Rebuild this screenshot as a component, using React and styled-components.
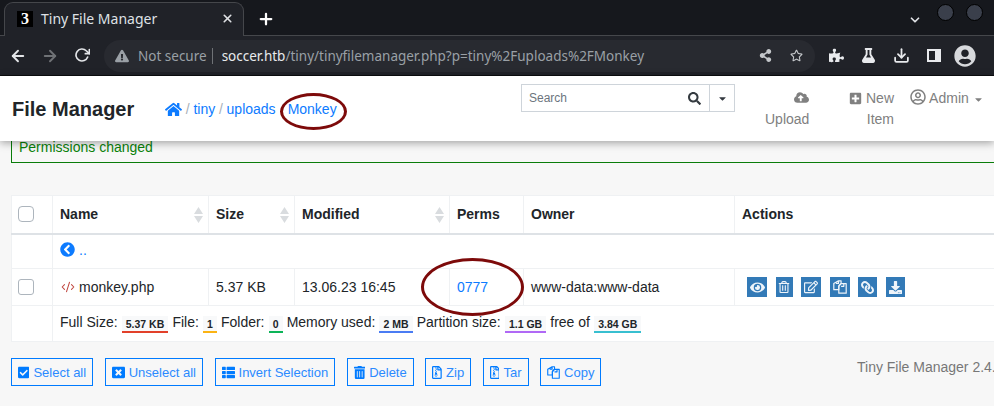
import styled, { createGlobalStyle } from "styled-components";
import {
  FaHome, FaSearch, FaCaretDown, FaCloudUploadAlt, FaPlusSquare, FaRegUserCircle,
  FaChevronCircleLeft, FaEye, FaRegTrashAlt, FaRegEdit, FaLink, FaDownload,
  FaCheckSquare, FaWindowClose, FaThList, FaTrashAlt, FaRegFileArchive, FaPuzzlePiece,
  FaFlask, FaUserCircle, FaRegStar, FaShareAlt, FaExclamationTriangle,
} from "react-icons/fa";
import { FiArrowLeft, FiArrowRight, FiRotateCw, FiPlus, FiX, FiChevronDown, FiDownload } from "react-icons/fi";
import { CodeXml } from "lucide-react";

const GlobalStyle = createGlobalStyle`
  html, body { margin: 0; padding: 0; background: #f7f7f7; }
  * { box-sizing: border-box; }
`;

const Page = styled.div`
  position: relative;
  width: 994px;
  height: 406px;
  overflow: hidden;
  display: flex;
  flex-direction: column;
  font-family: "Liberation Sans", Arial, sans-serif;
  font-size: 14px;
  color: #212529;
  background: #f7f7f7;
`;

const TabStrip = styled.div`
  height: 36px;
  flex: none;
  display: flex;
  align-items: flex-end;
  padding-left: 4px;
  background: #16181d;
  border-bottom: 1px solid #45474b;
  color: #fff;
  font-family: "Noto Sans", sans-serif;
`;

const Tab = styled.div`
  width: 240px;
  height: 34px;
  margin-bottom: -1px;
  display: flex;
  align-items: center;
  padding: 0 9px 2px 12px;
  background: #202228;
  border: 1px solid #45474b;
  border-bottom: none;
  border-radius: 9px 9px 0 0;
  font-size: 14px;
  color: #dfe1e5;
`;

const Favicon = styled.span`
  width: 16px;
  height: 16px;
  margin-right: 8px;
  background: #000;
  color: #fff;
  font: bold 16px/16px "Liberation Serif", serif;
  text-align: center;
`;

const TabTitle = styled.span`
  flex: 1;
`;

const NewTab = styled.span`
  margin: 0 auto 7px 13px;
  font-size: 18px;
  line-height: 18px;
  display: flex;
`;

const WindowControls = styled.div`
  align-self: flex-start;
  display: flex;
  align-items: flex-start;
  gap: 12px;
  margin: 4px 11px 0 0;
  color: #dfe1e5;
`;

const WindowChevron = styled(FiChevronDown)`
  margin: 9px 3px 0 0;
`;

const WindowDot = styled.span`
  width: 17px;
  height: 17px;
  border-radius: 50%;
  background: #3a3f4b;
  border: 1px solid #000;
`;

const Toolbar = styled.div`
  height: 40px;
  flex: none;
  display: flex;
  align-items: center;
  background: #202228;
  border-bottom: 1px solid #0c0d0f;
  color: #dfe1e5;
  font-family: "Noto Sans", sans-serif;
`;

const NavIcon = styled.span`
  width: 32px;
  display: flex;
  justify-content: center;
  color: ${p => p.$muted ? "#6f7276" : "#e3e5e8"};
  font-size: ${p => p.$size || 18}px;
`;

const NavIcons = styled.div`
  display: flex;
  padding-left: 2px;
  margin-right: 6px;
`;

const Omnibox = styled.div`
  width: 711px;
  height: 32px;
  display: flex;
  align-items: center;
  padding: 0 10px 0 11px;
  border-radius: 16px;
  background: #282a30;
  font-size: 13.5px;
  color: #9aa0a6;
`;

const NotSecure = styled.span`
  margin-left: 9px;
  padding-right: 5px;
  border-right: 1px solid #6f7276;
  line-height: 16px;
`;

const Url = styled.span`
  margin-left: 9px;
  flex: 1;
  white-space: nowrap;
  b { font-weight: 400; color: #e8eaed; }
`;

const OmniActions = styled.span`
  display: flex;
  gap: 18px;
  padding-right: 2px;
  font-size: 13px;
  color: #c4c7ca;
`;

const ToolActions = styled.div`
  display: flex;
  align-items: center;
  gap: 17px;
  margin-left: 14px;
  font-size: 15px;
  color: #e8eaed;
`;

const SidePanel = styled.span`
  width: 14px;
  height: 13px;
  border: 2px solid #e8eaed;
  border-right-width: 6px;
`;

const Avatar = styled.span`
  display: flex;
  margin-left: -4px;
  font-size: 22px;
  color: #d7d9dc;
`;

const Navbar = styled.header`
  position: relative;
  z-index: 2;
  height: 65px;
  flex: none;
  display: flex;
  align-items: flex-start;
  padding-left: 12px;
  background: #fff;
  box-shadow: 0 2px 8px rgba(0, 0, 0, 0.35);
`;

const Brand = styled.div`
  width: 153px;
  margin-top: 21px;
  font-size: 20px;
  font-weight: 700;
  line-height: 24px;
`;

const Breadcrumb = styled.nav`
  width: 356px;
  margin-top: 23px;
  display: flex;
  align-items: center;
  line-height: 21px;
  color: #007bff;
`;

const Sep = styled.span`
  margin: 0 3.75px;
  color: #a9b0b7;
`;

const Crumb = styled.a`
  color: #0d7bff;
  margin-left: ${p => p.$gap || 0}px;
  display: flex;
`;

const SearchBox = styled.div`
  width: 214px;
  height: 28px;
  margin-top: 8px;
  display: flex;
  border: 1px solid #ced4da;
`;

const SearchField = styled.div`
  flex: 1;
  display: flex;
  align-items: center;
  justify-content: space-between;
  padding: 0 8px 0 7px;
  border-right: 1px solid #ced4da;
  font-size: 12px;
  color: #6c757d;
  svg { font-size: 13px; color: #343a40; }
`;

const SearchCaret = styled.div`
  width: 24px;
  display: flex;
  align-items: center;
  justify-content: center;
  font-size: 11px;
  color: #343a40;
`;

const NavItem = styled.div`
  width: ${p => p.$width}px;
  margin-left: ${p => p.$gap}px;
  margin-top: 12px;
  text-align: right;
  line-height: 21px;
  color: #808080;
  svg { vertical-align: -2px; }
`;

const AdminItem = styled(NavItem)`
  white-space: nowrap;
  text-align: left;
`;

const Content = styled.main`
  flex: 1;
  display: flex;
  flex-direction: column;
`;

const Alert = styled.div`
  height: 22px;
  margin-left: 11px;
  margin-right: -4px;
  padding: 0 7px 9px;
  display: flex;
  align-items: flex-end;
  line-height: 12px;
  border: 1px solid #0a7d0a;
  border-top: none;
  color: #0a820a;
`;

const TableWrap = styled.div`
  margin: 32px 0 0 11px;
  overflow: hidden;
`;

const Table = styled.table`
  width: 1100px;
  table-layout: fixed;
  border-collapse: collapse;
  background: #fff;
  color: #212529;
  th, td {
    border: 1px solid #eff1f3;
    padding: 0 7px;
    text-align: left;
    vertical-align: middle;
  }
  th {
    height: 38px;
    font-weight: 700;
    border-bottom: 2px solid #dee2e6;
    position: relative;
  }
`;

const Check = styled.span`
  display: block;
  width: 16px;
  height: 16px;
  margin-left: -1px;
  border: 1px solid #adb5bd;
  border-radius: ${p => p.$radius || 3}px;
  background: #fff;
`;

const Sort = styled.svg`
  position: absolute;
  right: 5px;
  top: 11px;
  width: 9px;
  height: 16px;
  fill: #d9dcdf;
`;

const UpRow = styled.tr`
  height: 35px;
  td { padding-bottom: 1px; }
  a { color: #0d7bff; display: inline-flex; align-items: center; gap: 4px; }
  svg { font-size: 15px; }
`;

const FileRow = styled.tr`
  height: 37px;
  a { color: #0d7bff; }
`;

const FileName = styled.span`
  display: flex;
  align-items: center;
  gap: 4px;
  svg { color: #c0463f; margin-left: 1px; }
`;

const Actions = styled.div`
  display: flex;
  gap: 8.6px;
  margin-left: 5px;
`;

const ActionBtn = styled.span`
  width: ${p => p.$width || 20}px;
  height: 20px;
  display: flex;
  align-items: center;
  justify-content: center;
  background: #337ab7;
  color: #eef4fa;
  font-size: 13px;
`;

const ChainIcon = styled(FaLink)`
  transform: scaleX(-1);
`;

const FooterRow = styled.tr`
  height: 36px;
  td { white-space: nowrap; }
`;

const Stat = styled.span`
  display: inline-block;
  margin-left: 4px;
  height: 17px;
  padding: 0 4.2px;
  background: #f8f9fa;
  border-bottom: 2px solid ${p => p.$color};
  font-size: 10.5px;
  font-weight: 700;
  line-height: 16px;
  vertical-align: -1px;
`;

const Footer = styled.div`
  position: relative;
  margin: 16px 0 0 11px;
  display: flex;
  gap: 11.6px;
`;

const Btn = styled.button`
  height: 28px;
  display: flex;
  align-items: center;
  gap: 4px;
  padding: 0 6px;
  border: 1px solid #007bff;
  background: transparent;
  color: #2b8aff;
  font: 13px "Liberation Sans", Arial, sans-serif;
  white-space: nowrap;
  svg { color: #007bff; width: ${p => p.$icon || 13}px; height: 13px; }
`;

const Version = styled.span`
  position: absolute;
  left: 846px;
  top: 1px;
  white-space: nowrap;
  font-size: 14px;
  color: #777;
`;

// hand-drawn red rings sitting over the screenshot content
const Ring = styled.div`
  position: absolute;
  left: ${p => p.$x}px;
  top: ${p => p.$y}px;
  width: ${p => p.$w}px;
  height: ${p => p.$h}px;
  z-index: 3;
  border: 3px solid #7d0a0a;
  border-radius: 50%;
  pointer-events: none;
`;

function SortIcon() {
  return (
    <Sort viewBox="0 0 9 16">
      <path d="M4.5 0 9 7H0zM0 9h9l-4.5 7z" />
    </Sort>
  );
}

// two overlapping pages, the old font-awesome "files" glyph
function FilesIcon({ size = 14 }) {
  return (
    <svg viewBox="0 0 14 14" width={size} height={size} fill="none" stroke="currentColor" strokeWidth="1.2" strokeLinejoin="round">
      <path d="M5.5.8v2.6H2.9M5.5.8h2.6v2.6L5.8 5.6v4.1H.8V3.5z" />
      <path d="M10.8 3.6v2.7H8.1M10.8 3.6h2.4v9.6H5.8V6.3l2.3-2.7z" />
    </svg>
  );
}

const stats = [
  ["Full Size:", "5.37 KB", "#e2402a"],
  ["File:", "1", "#fbb314"],
  ["Folder:", "0", "#0cb458"],
  ["Memory used:", "2 MB", "#4a7cf3"],
  ["Partition size:", "1.1 GB", "#b068f5"],
  ["free of", "3.84 GB", "#38bfd0"],
];

function App() {
  return (
    <Page>
      <GlobalStyle />
      <TabStrip>
        <Tab>
          <Favicon>3</Favicon>
          <TabTitle>Tiny File Manager</TabTitle>
          <FiX size={13} strokeWidth={3} />
        </Tab>
        <NewTab><FiPlus strokeWidth={3} /></NewTab>
        <WindowControls>
          <WindowChevron size={14} strokeWidth={3} />
          <WindowDot />
          <WindowDot />
        </WindowControls>
      </TabStrip>
      <Toolbar>
        <NavIcons>
          <NavIcon><FiArrowLeft strokeWidth={2.5} /></NavIcon>
          <NavIcon $muted><FiArrowRight strokeWidth={2.5} /></NavIcon>
          <NavIcon><FiRotateCw strokeWidth={2.5} size={16} /></NavIcon>
        </NavIcons>
        <Omnibox>
          <FaExclamationTriangle size={14} />
          <NotSecure>Not secure</NotSecure>
          <Url><b>soccer.htb</b>/tiny/tinyfilemanager.php?p=tiny%2Fuploads%2FMonkey</Url>
          <OmniActions>
            <FaShareAlt />
            <FaRegStar />
          </OmniActions>
        </Omnibox>
        <ToolActions>
          <FaPuzzlePiece />
          <FaFlask />
          <FiDownload size={17} strokeWidth={2.5} />
          <SidePanel />
          <Avatar><FaUserCircle /></Avatar>
        </ToolActions>
      </Toolbar>
      <Navbar>
        <Brand>File Manager</Brand>
        <Breadcrumb>
          <Crumb><FaHome size={17} /></Crumb>
          <Sep>/</Sep>
          <Crumb>tiny</Crumb>
          <Sep>/</Sep>
          <Crumb>uploads</Crumb>
          <Crumb $gap={12}>Monkey</Crumb>
        </Breadcrumb>
        <SearchBox>
          <SearchField>Search<FaSearch /></SearchField>
          <SearchCaret><FaCaretDown /></SearchCaret>
        </SearchBox>
        <NavItem $width={44} $gap={30}><FaCloudUploadAlt size={15} /><br />Upload</NavItem>
        <NavItem $width={45} $gap={40}><FaPlusSquare size={13} /> New Item</NavItem>
        <AdminItem $width={70} $gap={16}><FaRegUserCircle size={16} /> Admin <FaCaretDown size={11} /></AdminItem>
      </Navbar>
      <Content>
        <Alert>Permissions changed</Alert>
        <TableWrap>
          <Table>
            <colgroup>
              <col width="41" /><col width="156" /><col width="86" /><col width="155" />
              <col width="74" /><col width="211" /><col />
            </colgroup>
            <thead>
              <tr>
                <th><Check $radius={4} /></th>
                <th>Name<SortIcon /></th>
                <th>Size<SortIcon /></th>
                <th>Modified<SortIcon /></th>
                <th>Perms</th>
                <th>Owner</th>
                <th>Actions</th>
              </tr>
            </thead>
            <tbody>
              <UpRow>
                <td />
                <td colSpan={6}><a><FaChevronCircleLeft /> ..</a></td>
              </UpRow>
              <FileRow>
                <td><Check /></td>
                <td><FileName><CodeXml size={14} strokeWidth={1.8} /> monkey.php</FileName></td>
                <td>5.37 KB</td>
                <td>13.06.23 16:45</td>
                <td><a>0777</a></td>
                <td>www-data:www-data</td>
                <td>
                  <Actions>
                    <ActionBtn><FaEye size={15} /></ActionBtn>
                    <ActionBtn $width={17}><FaRegTrashAlt size={12} /></ActionBtn>
                    <ActionBtn><FaRegEdit size={14} /></ActionBtn>
                    <ActionBtn><FilesIcon /></ActionBtn>
                    <ActionBtn $width={19}><ChainIcon size={13} /></ActionBtn>
                    <ActionBtn $width={19}><FaDownload size={13} /></ActionBtn>
                  </Actions>
                </td>
              </FileRow>
              <FooterRow>
                <td />
                <td colSpan={6}>
                  {stats.map(([label, value, color]) => (
                    <span key={label}>
                      {label}<Stat $color={color}>{value}</Stat>{" "}
                    </span>
                  ))}
                </td>
              </FooterRow>
            </tbody>
          </Table>
        </TableWrap>
        <Footer>
          <Btn $icon={11.4}><FaCheckSquare /> Select all</Btn>
          <Btn><FaWindowClose /> Unselect all</Btn>
          <Btn><FaThList /> Invert Selection</Btn>
          <Btn $icon={11.4}><FaTrashAlt /> Delete</Btn>
          <Btn $icon={9.75}><FaRegFileArchive /> Zip</Btn>
          <Btn $icon={9.75}><FaRegFileArchive /> Tar</Btn>
          <Btn><FilesIcon size={13} /> Copy</Btn>
          <Version>Tiny File Manager 2.4.6</Version>
        </Footer>
      </Content>
      <Ring $x={280} $y={93} $w={67} $h={37} />
      <Ring $x={421} $y={258} $w={103} $h={58} />
    </Page>
  );
}

export default App;
